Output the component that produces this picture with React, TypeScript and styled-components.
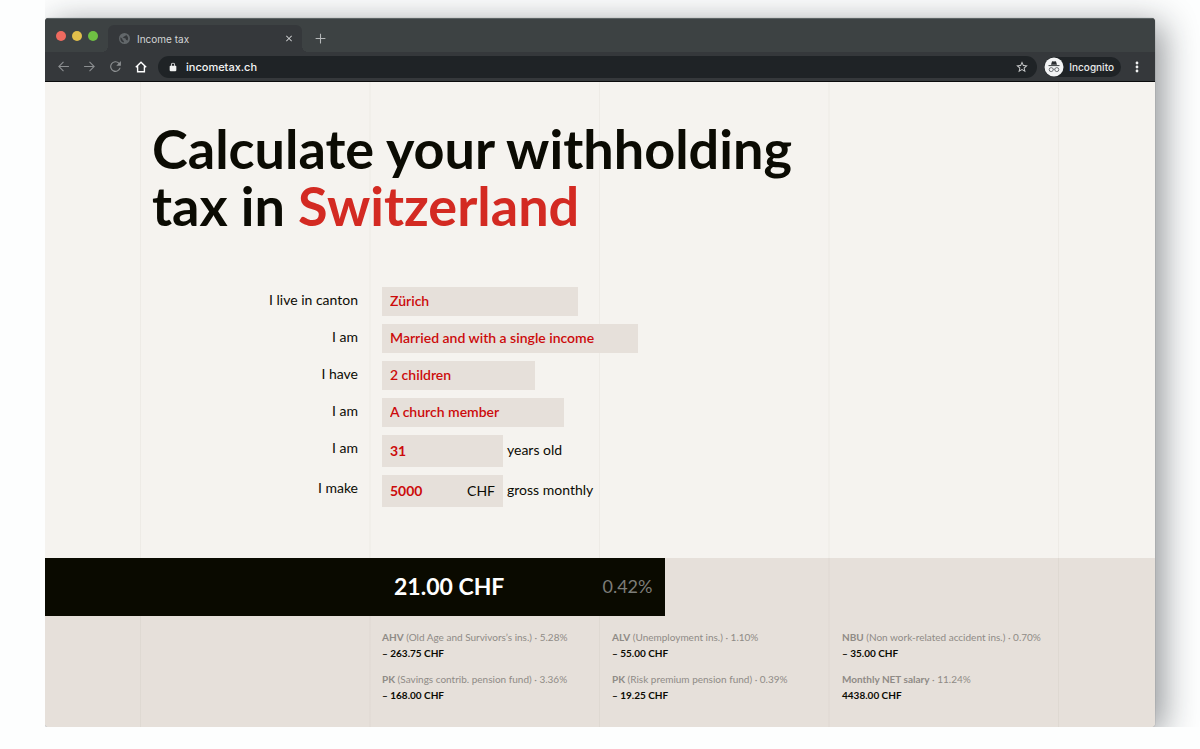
import React from "react";
import styled, { createGlobalStyle, css } from "styled-components";

const GlobalStyle = createGlobalStyle`
  *, *::before, *::after { box-sizing: border-box; }
  body {
    margin: 0;
    background: #fdfefe;
    font-family: Lato, "Liberation Sans", sans-serif;
    color: #0b0b03;
  }
  button, input, select { font: inherit; color: inherit; border: 0; margin: 0; padding: 0; background: none; }
`;

const gutter = "95px";

const columnLines = css`
  background-image: linear-gradient(to right, rgba(90, 80, 60, 0.05) 1px, transparent 1px);
  background-size: calc((100% - 2 * ${gutter} - 2px) / 4) 100%;
  background-position: ${gutter} 0;
`;

const Desktop = styled.div`
  margin-left: 45px;
  padding: 18px 45px 0 0;
  overflow: hidden;
`;

const Window = styled.div`
  border-radius: 4px;
  overflow: hidden;
  background: #f5f3ef;
  box-shadow: 0 0 1px rgba(0, 0, 0, 0.5), 8px 6px 34px rgba(20, 25, 30, 0.46);
`;

/* Browser chrome */

const Chrome = styled.header`
  font-family: Inter, "Liberation Sans", sans-serif;
  color: #e9eaeb;
  background: #35383b;
  border-bottom: 1px solid #0a0b0c;
`;

const TabStrip = styled.div`
  display: flex;
  align-items: flex-end;
  height: 34px;
  padding-left: 11px;
  background: #3d4243;
  border-top: 1px solid #5b6364;
`;

const Lights = styled.div`
  display: flex;
  gap: 6px;
  align-self: center;
  width: 52px;
`;

const Light = styled.button<{ $color: string }>`
  width: 10px;
  height: 10px;
  border-radius: 50%;
  background: ${(p) => p.$color};
`;

const Tab = styled.div`
  position: relative;
  display: flex;
  align-items: center;
  gap: 7px;
  width: 194px;
  height: 27px;
  padding: 0 8px 0 11px;
  border-radius: 6px 6px 0 0;
  background: #35383b;
  font-size: 10px;

  &::before, &::after {
    content: "";
    position: absolute;
    bottom: 0;
    width: 6px;
    height: 6px;
  }
  &::before { left: -6px; background: radial-gradient(circle at 0 0, transparent 6px, #35383b 6px); }
  &::after { right: -6px; background: radial-gradient(circle at 100% 0, transparent 6px, #35383b 6px); }
`;

const TabTitle = styled.span`
  flex: 1;
  color: #d3d5d6;
`;

const IconButton = styled.button`
  display: flex;
  align-items: center;
  justify-content: center;
  width: 26px;
  height: 24px;
`;

const CloseButton = styled(IconButton)`
  width: 10px;
`;

const NewTabButton = styled(IconButton)`
  height: 27px;
  margin-left: 5px;
`;

const Toolbar = styled.div`
  display: flex;
  align-items: center;
  height: 29px;
  padding: 0 5px;
`;

const AddressBar = styled.label`
  flex: 1;
  display: flex;
  align-items: center;
  gap: 8px;
  height: 22px;
  margin: 0 7px 0 4px;
  padding: 0 2px 0 10px;
  border-radius: 11px;
  background: #1f2326;
`;

const AddressInput = styled.input`
  flex: 1;
  min-width: 0;
  font-size: 11px;
  font-weight: 500;
  color: #f4f5f5;
  outline: none;
`;

const Profile = styled.button`
  display: flex;
  align-items: center;
  gap: 5px;
  height: 20px;
  padding-right: 7px;
  border-radius: 10px;
  background: #1f2326;
  font-size: 10px;
  font-weight: 500;
`;

const MenuButton = styled(IconButton)`
  margin-left: 3px;
`;

/* Calculator */

const Intro = styled.main`
  ${columnLines}
  padding: 38px ${gutter} 51px;
`;

const Title = styled.h1`
  margin: 0;
  padding-left: 12px;
  font-size: 54px;
  line-height: 57px;
  font-weight: 700;
`;

const Accent = styled.span`
  color: #d32a22;
`;

const Form = styled.form`
  display: grid;
  grid-template-columns: 1fr 3fr;
  row-gap: 8px;
  margin-top: 53px;
  font-size: 14px;
`;

const FieldLabel = styled.label`
  padding: 4px 12px 0 0;
  line-height: 18px;
  text-align: right;
`;

const Field = styled.div`
  display: flex;
  align-items: center;
  gap: 4px;
  padding-left: 12px;
`;

const Choice = styled.select<{ $width: number }>`
  appearance: none;
  width: ${(p) => p.$width}px;
  height: 29px;
  padding: 0 8px 2px;
  border-radius: 0;
  background: #e6e0da;
  color: #cc0b0b;
  font-weight: 600;
`;

const AmountBox = styled.span`
  display: flex;
  align-items: center;
  width: 121px;
  height: 32px;
  padding: 0 8px 2px;
  background: #e6e0da;
`;

const Suffix = styled.span`
  padding-bottom: 3px;
`;

const AmountInput = styled.input`
  flex: 1;
  min-width: 0;
  color: #cc0b0b;
  font-weight: 700;
`;

const Results = styled.section`
  ${columnLines}
  background-color: #e6e0da;
  padding-bottom: 24px;
`;

const TaxBar = styled.div`
  display: flex;
  align-items: center;
  justify-content: space-between;
  height: 58px;
  padding: 0 13px 2px calc(${gutter} + (100% - 2 * ${gutter}) / 4 + 24px);
  background: #0a0a00;
`;

const TaxAmount = styled.strong`
  font-size: 23px;
  font-weight: 700;
  color: #fff;
`;

const TaxRate = styled.span`
  font-size: 18px;
  color: #7d7d78;
`;

const Deductions = styled.dl`
  display: grid;
  grid-template-columns: repeat(4, 1fr);
  row-gap: 10px;
  margin: 0;
  padding: 13px ${gutter} 0;
  font-size: 10px;
  line-height: 16px;
`;

const Deduction = styled.div<{ $first?: boolean }>`
  grid-column-start: ${(p) => (p.$first ? 2 : "auto")};
  padding-left: 12px;
  white-space: nowrap;
`;

const Term = styled.dt`
  color: #8f8b86;
`;

const Value = styled.dd`
  margin: 0;
  font-weight: 700;
`;

const choices = [
  { id: "canton", label: "I live in canton", value: "Zürich", width: 196 },
  { id: "status", label: "I am", value: "Married and with a single income", width: 256 },
  { id: "children", label: "I have", value: "2 children", width: 153 },
  { id: "church", label: "I am", value: "A church member", width: 182 },
];

const deductions = [
  { name: "AHV", note: " (Old Age and Survivors’s ins.) · 5.28%", value: "– 263.75 CHF" },
  { name: "ALV", note: " (Unemployment ins.) · 1.10%", value: "– 55.00 CHF" },
  { name: "NBU", note: " (Non work-related accident ins.) · 0.70%", value: "– 35.00 CHF" },
  { name: "PK", note: " (Savings contrib. pension fund) · 3.36%", value: "– 168.00 CHF" },
  { name: "PK", note: " (Risk premium pension fund) · 0.39%", value: "– 19.25 CHF" },
  { name: "Monthly NET salary", note: " · 11.24%", value: "4438.00 CHF" },
];

const barShare = 55.9;

const MaterialIcon = ({ d, size, color }: { d: string; size: number; color: string }) => (
  <svg width={size} height={size} viewBox="0 0 24 24" fill={color} aria-hidden="true">
    <path d={d} />
  </svg>
);

const paths = {
  globe:
    "M12 0a12 12 0 1 0 0 24 12 12 0 0 0 0-24zM3 12c0-1 .2-2 .5-3l4 4v2l3 2.500v3.400A9 9 0 0 1 3 12zm15 5c-.4-1-1-1.500-2-1.500h-1v-3l-4-1.500H8.500V9h2V7h2.500l2-2V3.600A9 9 0 0 1 18 17z",
  close: "M19 6.400 17.600 5 12 10.600 6.400 5 5 6.400 10.600 12 5 17.600 6.400 19 12 13.400 17.600 19 19 17.600 13.400 12z",
  plus: "M21 13h-8v8h-2v-8H3v-2h8V3h2v8h8z",
  back: "M22 11H5.800l6.900-6.900L11.300 2.700 2 12l9.300 9.300 1.400-1.400L5.800 13H22z",
  forward: "M2 11h16.200l-6.900-6.900 1.400-1.400L22 12l-9.300 9.300-1.400-1.400 6.900-6.900H2z",
  reload:
    "M19 5A9.900 9.900 0 1 0 21.600 14.500h-2.200A7.800 7.800 0 1 1 17.500 6.500L13.500 10.500H22V2z",
  lock: "M18 9h-1V6.500a5 5 0 0 0-10 0V9H6a2 2 0 0 0-2 2v9a2 2 0 0 0 2 2h12a2 2 0 0 0 2-2v-9a2 2 0 0 0-2-2zM9 9V6.500a3 3 0 0 1 6 0V9z",
  star: "M22 9.240l-7.190-.62L12 2 9.190 8.630 2 9.240l5.460 4.730L5.820 21 12 17.270 18.180 21l-1.630-7.030zM12 15.400l-3.760 2.270 1-4.280-3.320-2.880 4.380-.38L12 6.100l1.710 4.040 4.380.38-3.320 2.880 1 4.280z",
};

const HomeIcon = () => (
  <svg width="12" height="12" viewBox="0 0 12 12" fill="none" stroke="#fff" strokeWidth="1.4" aria-hidden="true">
    <path d="M.8 6.300 6 1.200l5.200 5.100M2.600 5.200v5.500h6.800V5.200" />
  </svg>
);

const IncognitoIcon = () => (
  <svg width="20" height="20" viewBox="0 0 20 20" aria-hidden="true">
    <circle cx="10" cy="10" r="9.500" fill="#f3f4f5" />
    <path d="M7 7.700 8 4.600q.2-.5.800-.4l1.200.3 1.200-.3q.6-.1.800.4l1 3.100z" fill="#2a2d30" />
    <path d="M4.500 8.600h11" stroke="#3c4043" strokeWidth="1" />
    <g fill="none" stroke="#5f6368" strokeWidth=".9">
      <circle cx="7.200" cy="12.600" r="2" />
      <circle cx="12.800" cy="12.600" r="2" />
      <path d="M9.200 12.400q.8-.6 1.600 0" />
    </g>
  </svg>
);

const DotsIcon = () => (
  <svg width="4" height="12" viewBox="0 0 4 12" fill="#f1f2f2" aria-hidden="true">
    <circle cx="2" cy="2" r="1.400" />
    <circle cx="2" cy="6" r="1.400" />
    <circle cx="2" cy="10" r="1.400" />
  </svg>
);

export default function App() {
  return (
    <>
      <GlobalStyle />
      <Desktop>
        <Window>
          <Chrome>
            <TabStrip>
              <Lights>
                <Light $color="#ee6a5f" aria-label="Close window" />
                <Light $color="#e2bf4b" aria-label="Minimise window" />
                <Light $color="#6fc043" aria-label="Zoom window" />
              </Lights>
              <Tab>
                <MaterialIcon d={paths.globe} size={11} color="#62676a" />
                <TabTitle>Income tax</TabTitle>
                <CloseButton aria-label="Close tab">
                  <MaterialIcon d={paths.close} size={13} color="#d8dadb" />
                </CloseButton>
              </Tab>
              <NewTabButton aria-label="New tab">
                <MaterialIcon d={paths.plus} size={13} color="#b5b8b9" />
              </NewTabButton>
            </TabStrip>
            <Toolbar>
              <IconButton aria-label="Back">
                <MaterialIcon d={paths.back} size={13} color="#8c8f91" />
              </IconButton>
              <IconButton aria-label="Forward">
                <MaterialIcon d={paths.forward} size={13} color="#8c8f91" />
              </IconButton>
              <IconButton aria-label="Reload">
                <MaterialIcon d={paths.reload} size={13} color="#8c8f91" />
              </IconButton>
              <IconButton aria-label="Home">
                <HomeIcon />
              </IconButton>
              <AddressBar>
                <MaterialIcon d={paths.lock} size={10} color="#f1f2f2" />
                <AddressInput aria-label="Address" defaultValue="incometax.ch" />
                <IconButton aria-label="Bookmark" type="button">
                  <MaterialIcon d={paths.star} size={14} color="#c9cbcc" />
                </IconButton>
              </AddressBar>
              <Profile>
                <IncognitoIcon />
                Incognito
              </Profile>
              <MenuButton aria-label="Menu">
                <DotsIcon />
              </MenuButton>
            </Toolbar>
          </Chrome>

          <Intro>
            <Title>
              Calculate your withholding
              <br />
              tax in <Accent>Switzerland</Accent>
            </Title>
            <Form>
              {choices.map((c) => (
                <React.Fragment key={c.id}>
                  <FieldLabel htmlFor={c.id}>{c.label}</FieldLabel>
                  <Field>
                    <Choice id={c.id} $width={c.width} defaultValue={c.value}>
                      <option>{c.value}</option>
                    </Choice>
                  </Field>
                </React.Fragment>
              ))}
              <FieldLabel htmlFor="age">I am</FieldLabel>
              <Field>
                <AmountBox>
                  <AmountInput id="age" defaultValue="31" />
                </AmountBox>
                <Suffix>years old</Suffix>
              </Field>
              <FieldLabel htmlFor="salary">I make</FieldLabel>
              <Field>
                <AmountBox>
                  <AmountInput id="salary" defaultValue="5000" />
                  CHF
                </AmountBox>
                <Suffix>gross monthly</Suffix>
              </Field>
            </Form>
          </Intro>

          <Results>
            <TaxBar style={{ width: `${barShare}%` }}>
              <TaxAmount>21.00 CHF</TaxAmount>
              <TaxRate>0.42%</TaxRate>
            </TaxBar>
            <Deductions>
              {deductions.map((d, i) => (
                <Deduction key={d.name + d.value} $first={i % 3 === 0}>
                  <Term>
                    <b>{d.name}</b>
                    {d.note}
                  </Term>
                  <Value>{d.value}</Value>
                </Deduction>
              ))}
            </Deductions>
          </Results>
        </Window>
      </Desktop>
    </>
  );
}
